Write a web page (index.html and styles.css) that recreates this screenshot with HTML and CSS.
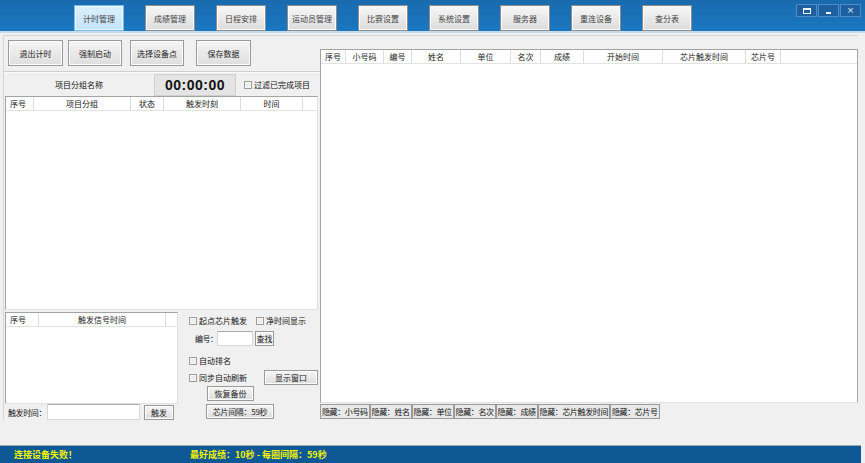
FILE: index.html
```html
<!doctype html>
<html>
<head>
<meta charset="utf-8">
<title>计时管理</title>
<link rel="stylesheet" href="styles.css">
</head>
<body>
<div id="page">
  <div class="topbar">
    <div class="nav">
      <span class="nav-btn active">计时管理</span>
      <span class="nav-btn">成绩管理</span>
      <span class="nav-btn">日程安排</span>
      <span class="nav-btn">运动员管理</span>
      <span class="nav-btn">比赛设置</span>
      <span class="nav-btn">系统设置</span>
      <span class="nav-btn">服务器</span>
      <span class="nav-btn">重连设备</span>
      <span class="nav-btn">查分表</span>
    </div>
    <div class="winctl">
      <span class="wc"><i class="wc-max"></i></span>
      <span class="wc"><i class="wc-min"></i></span>
      <span class="wc wc-close">×</span>
    </div>
  </div>

  <div class="main">
    <div class="left">
      <div class="btnrow">
        <span class="btn big">退出计时</span>
        <span class="btn big">强制启动</span>
        <span class="btn big">选择设备点</span>
        <span class="btn big">保存数据</span>
      </div>
      <div class="sep"></div>
      <div class="inforow">
        <span class="group-label">项目分组名称</span>
        <span class="timer">00:00:00</span>
        <label class="check"><span class="cb"></span>过滤已完成项目</label>
      </div>
      <div class="grid grid-main">
        <div class="ghead">
          <span class="c-l" style="width:28px">序号</span>
          <span style="width:97px">项目分组</span>
          <span style="width:33px">状态</span>
          <span style="width:77px">触发时刻</span>
          <span style="width:62px">时间</span>
          <span class="fill"></span>
        </div>
      </div>
      <div class="lower">
        <div class="lower-left">
          <div class="grid grid-small">
            <div class="ghead">
              <span class="c-l" style="width:33px">序号</span>
              <span style="width:127px">触发信号时间</span>
              <span class="fill"></span>
            </div>
          </div>
          <div class="trigger">
            <span class="trigger-label">触发时间：</span>
            <span class="input trigger-input"></span>
            <span class="btn small trigger-btn">触发</span>
          </div>
        </div>
        <div class="controls">
          <div class="crow r1">
            <label class="check"><span class="cb"></span>起点芯片触发</label>
            <label class="check net"><span class="cb"></span>净时间显示</label>
          </div>
          <div class="crow r2">
            <span class="num-label">编号：</span>
            <span class="input num-input"></span>
            <span class="btn small find-btn">查找</span>
          </div>
          <div class="crow r3">
            <label class="check"><span class="cb"></span>自动排名</label>
          </div>
          <div class="crow r4">
            <label class="check"><span class="cb"></span>同步自动刷新</label>
            <span class="btn small show-btn">显示窗口</span>
          </div>
          <div class="crow r5">
            <span class="btn small restore-btn">恢复备份</span>
          </div>
          <div class="crow r6">
            <span class="btn small chip-btn">芯片间隔：59秒</span>
          </div>
        </div>
      </div>
    </div>

    <div class="right">
      <div class="strip"></div>
      <div class="grid grid-results">
        <div class="ghead">
          <span class="c-l" style="width:25px">序号</span>
          <span style="width:38px">小号码</span>
          <span style="width:28px">编号</span>
          <span style="width:49px">姓名</span>
          <span style="width:50px">单位</span>
          <span style="width:30px">名次</span>
          <span style="width:43px">成绩</span>
          <span style="width:79px">开始时间</span>
          <span style="width:83px">芯片触发时间</span>
          <span style="width:35px">芯片号</span>
          <span class="fill"></span>
        </div>
      </div>
      <div class="hiderow">
        <span class="hide-btn">隐藏：小号码</span>
        <span class="hide-btn">隐藏：姓名</span>
        <span class="hide-btn">隐藏：单位</span>
        <span class="hide-btn">隐藏：名次</span>
        <span class="hide-btn">隐藏：成绩</span>
        <span class="hide-btn">隐藏：芯片触发时间</span>
        <span class="hide-btn">隐藏：芯片号</span>
      </div>
    </div>
  </div>

  <div class="status">
    <span class="status-left">连接设备失败！</span>
    <span class="status-mid">最好成绩：10秒 - 每圈间隔：59秒</span>
  </div>
</div>
</body>
</html>
```

FILE: styles.css
```css
html, body {
  margin: 0;
  padding: 0;
}
body {
  width: 865px;
  height: 463px;
  overflow: hidden;
  background: #fff;
  font-family: "Noto Sans CJK SC", "Liberation Sans", sans-serif;
  font-size: 8px;
  color: #111;
}
#page {
  width: 865px;
  height: 463px;
  display: flex;
  flex-direction: column;
  background: #f0f0f0;
}

/* top bar */
.topbar {
  height: 31px;
  display: flex;
  align-items: flex-start;
  padding-left: 74px;
  background: linear-gradient(#196aae, #1b78c1);
  border-bottom: 2px solid #c7dbee;
}
.nav {
  display: flex;
  gap: 21px;
  padding-top: 5px;
}
.nav-btn {
  width: 50px;
  height: 26px;
  box-sizing: border-box;
  display: flex;
  align-items: center;
  justify-content: center;
  border: 1px solid #8c8c8c;
  box-shadow: inset 0 0 0 1px #fbfbfb;
  background: linear-gradient(#f7f7f7, #dcdcdc);
  color: #444;
  white-space: nowrap;
}
.nav-btn.active {
  border-color: #74bde9;
  box-shadow: inset 0 0 0 1px #e9f6ff;
  background: linear-gradient(#dcf0fd, #c3e4f8);
}
.winctl {
  margin-left: auto;
  margin-right: 4px;
  margin-top: 4px;
  display: flex;
}
.wc {
  width: 21px;
  height: 13px;
  box-sizing: border-box;
  border: 1px solid #4f8cc6;
  background: #1d5f9f;
  display: flex;
  align-items: center;
  justify-content: center;
  color: #e8f0f8;
  font-family: "DejaVu Sans", sans-serif;
  font-size: 9px;
  line-height: 1;
}
.wc + .wc {
  margin-left: 1px;
}
.wc-max {
  width: 6px;
  height: 3px;
  border: 1px solid #eef4fa;
  border-top-width: 2px;
}
.wc-min {
  width: 5px;
  height: 2px;
  margin-top: 4px;
  background: #eef4fa;
}

/* main */
.main {
  display: flex;
  margin-top: 2px;
}
.left {
  width: 316px;
  margin-left: 3px;
  border-left: 1px solid #d6d6d6;
  border-top: 1px solid #d6d6d6;
}
.btnrow {
  display: flex;
  padding: 4px 0 0 4px;
}
.btn {
  box-sizing: border-box;
  display: flex;
  align-items: center;
  justify-content: center;
  border: 1px solid #9a9a9a;
  box-shadow: inset 0 0 0 1px #fcfcfc;
  background: linear-gradient(#f5f5f5, #dedede);
  white-space: nowrap;
  color: #222;
}
.big {
  width: 55px;
  height: 26px;
}
.btnrow .btn:nth-child(2) { margin-left: 5px; width: 54px; }
.btnrow .btn:nth-child(3) { margin-left: 8px; width: 54px; }
.btnrow .btn:nth-child(4) { margin-left: 12px; }
.sep {
  margin-top: 5px;
  border-top: 1px solid #cfcfcf;
  border-bottom: 1px solid #fafafa;
}
.inforow {
  height: 23px;
  display: flex;
  align-items: center;
}
.group-label {
  width: 150px;
  text-align: center;
}
.timer {
  width: 82px;
  height: 22px;
  box-sizing: border-box;
  display: flex;
  align-items: center;
  justify-content: center;
  background: #e4e4e4;
  border: 1px solid #cfcfcf;
  font-family: "Liberation Sans", sans-serif;
  font-weight: bold;
  font-size: 14px;
  letter-spacing: 0.5px;
  color: #111;
}
.check {
  display: flex;
  align-items: center;
  white-space: nowrap;
}
.inforow .check {
  margin-left: 8px;
}
.cb {
  width: 8px;
  height: 8px;
  box-sizing: border-box;
  border: 1px solid #9c9c9c;
  background: #ececec;
  box-shadow: inset 0 0 0 1px #f8f8f8;
  margin-right: 2px;
}

/* grids */
.grid {
  box-sizing: border-box;
  background: #fff;
  border: 1px solid #a3a3a3;
  border-right-color: #e2e2e2;
  border-bottom-color: #e2e2e2;
}
.ghead {
  display: flex;
  height: 13px;
  border-bottom: 1px solid #e3e3e3;
}
.ghead span {
  flex: none;
  box-sizing: border-box;
  height: 13px;
  line-height: 13px;
  text-align: center;
  border-right: 1px solid #dcdcdc;
  white-space: nowrap;
  color: #222;
}
.ghead .c-l {
  text-align: left;
  padding-left: 4px;
}
.ghead .fill {
  flex: 1;
  border-right: 0;
}
.grid-main {
  width: 313px;
  height: 214px;
  margin-left: 1px;
}
.lower {
  display: flex;
  margin-top: 2px;
}
.lower-left {
  width: 173px;
  margin-left: 1px;
}
.grid-small {
  height: 92px;
}
.trigger {
  height: 16px;
  display: flex;
  align-items: center;
}
.trigger-label {
  margin-left: 3px;
  width: 39px;
  white-space: nowrap;
  letter-spacing: -0.4px;
}
.input {
  box-sizing: border-box;
  background: #fff;
  border: 1px solid #d8d8d8;
  border-top-color: #ababab;
}
.trigger-input {
  width: 93px;
  height: 16px;
}
.small {
  height: 15px;
}
.trigger-btn {
  width: 30px;
  margin-left: 4px;
}

/* right-hand controls */
.controls {
  width: 136px;
  margin-left: 5px;
  display: flex;
  flex-direction: column;
}
.crow {
  display: flex;
  align-items: center;
}
.r1 {
  margin-top: 3px;
  height: 11px;
  padding-left: 6px;
}
.r1 .net {
  margin-left: 9px;
}
.r2 {
  margin-top: 4px;
  height: 16px;
}
.num-label {
  margin-left: 12px;
  width: 22px;
  white-space: nowrap;
  letter-spacing: -0.5px;
}
.num-input {
  width: 36px;
  height: 15px;
}
.find-btn {
  width: 19px;
  margin-left: 2px;
}
.r3 {
  margin-top: 9px;
  height: 11px;
  padding-left: 6px;
}
.r4 {
  margin-top: 4px;
  height: 15px;
  padding-left: 6px;
}
.show-btn {
  width: 54px;
  margin-left: 17px;
}
.r5 {
  margin-top: 1px;
  padding-left: 24px;
}
.restore-btn {
  width: 47px;
}
.r6 {
  margin-top: 3px;
  padding-left: 23px;
}
.chip-btn {
  width: 68px;
  letter-spacing: -0.3px;
}

/* right panel */
.right {
  width: 538px;
  border-top: 1px solid #d6d6d6;
}
.strip {
  height: 13px;
}
.grid-results {
  height: 354px;
  border-right-color: #a8a8a8;
}
.hiderow {
  display: flex;
  margin-top: 1px;
}
.hide-btn {
  height: 15px;
  box-sizing: border-box;
  padding: 0 1px;
  display: flex;
  align-items: center;
  border: 1px solid #9a9a9a;
  background: #e9e9e9;
  white-space: nowrap;
  letter-spacing: -0.4px;
}

/* status bar */
.status {
  margin-top: auto;
  width: 861px;
  height: 17px;
  display: flex;
  align-items: center;
  background: #0e5896;
  border-top: 1px solid #9aaabb;
  color: #f4f400;
  font-weight: bold;
  font-size: 9px;
}
.status-left {
  margin-left: 14px;
  width: 176px;
}
```
